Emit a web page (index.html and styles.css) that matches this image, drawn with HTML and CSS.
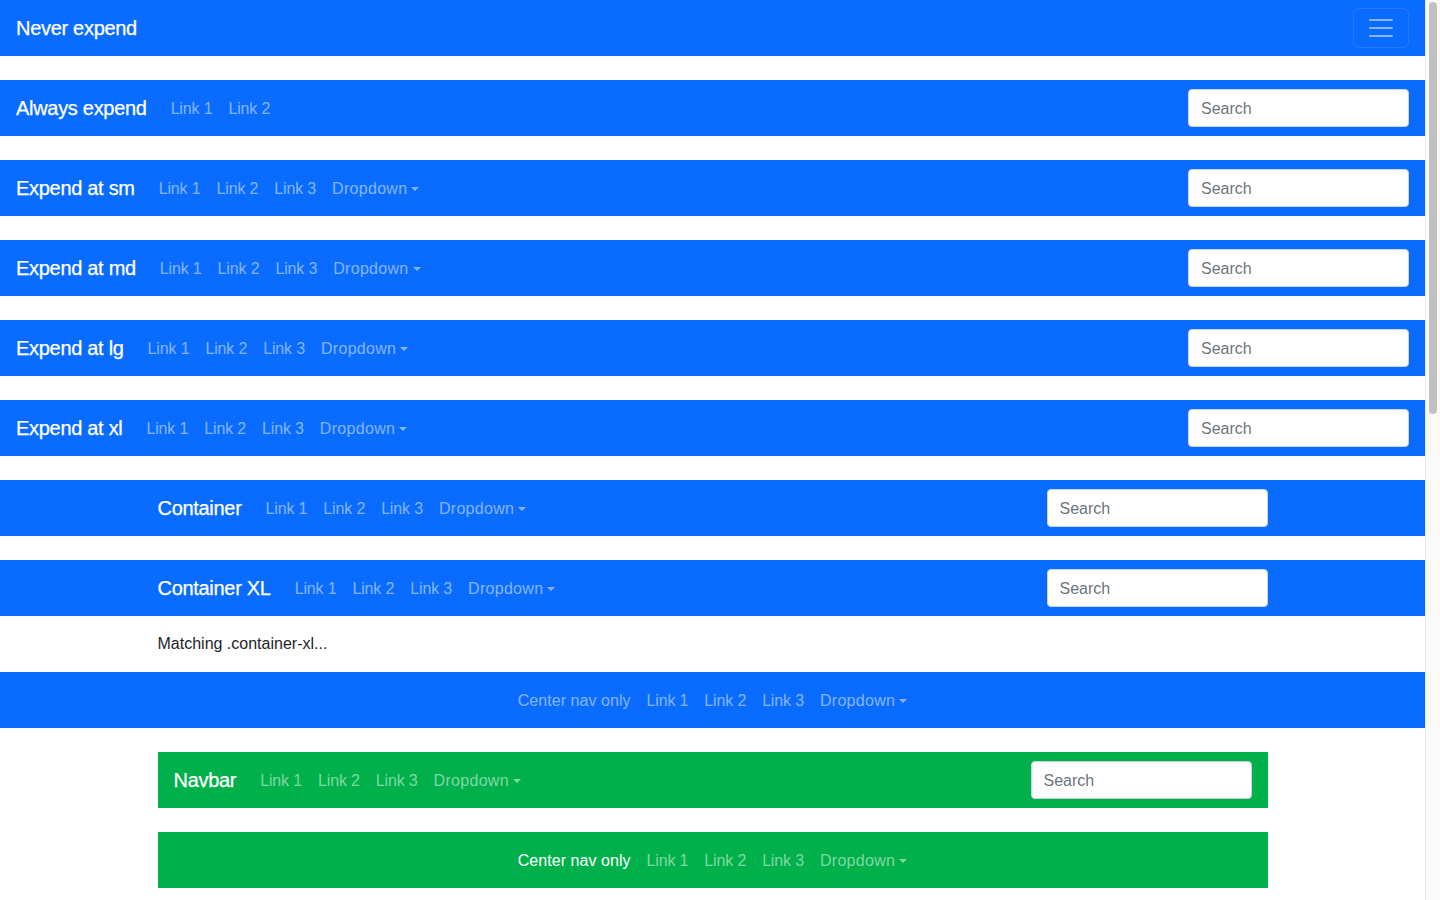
FILE: index.html
```html
<!DOCTYPE html>
<html lang="en">
<head>
<meta charset="utf-8">
<title>Navbars</title>
<link rel="stylesheet" href="styles.css">
</head>
<body>
<main class="page">
  <nav class="navbar">
    <a class="brand" href="#">Never expend</a>
    <button class="toggler" type="button" aria-label="Toggle navigation">
      <svg class="toggler-icon" viewBox="0 0 30 30" width="30" height="30"><path d="M4 7h22M4 15h22M4 23h22" stroke="rgba(255,255,255,0.5)" stroke-width="2" stroke-linecap="round" fill="none"/></svg>
    </button>
  </nav>

  <nav class="navbar">
    <a class="brand" href="#">Always expend</a>
    <ul class="nav"><li><a class="link" href="#">Link 1</a></li><li><a class="link" href="#">Link 2</a></li></ul>
    <form class="search"><input class="search-input" type="text" placeholder="Search"></form>
  </nav>

  <nav class="navbar">
    <a class="brand" href="#">Expend at sm</a>
    <ul class="nav"><li><a class="link" href="#">Link 1</a></li><li><a class="link" href="#">Link 2</a></li><li><a class="link" href="#">Link 3</a></li><li><a class="link dropdown" href="#">Dropdown</a></li></ul>
    <form class="search"><input class="search-input" type="text" placeholder="Search"></form>
  </nav>

  <nav class="navbar">
    <a class="brand" href="#">Expend at md</a>
    <ul class="nav"><li><a class="link" href="#">Link 1</a></li><li><a class="link" href="#">Link 2</a></li><li><a class="link" href="#">Link 3</a></li><li><a class="link dropdown" href="#">Dropdown</a></li></ul>
    <form class="search"><input class="search-input" type="text" placeholder="Search"></form>
  </nav>

  <nav class="navbar">
    <a class="brand" href="#">Expend at lg</a>
    <ul class="nav"><li><a class="link" href="#">Link 1</a></li><li><a class="link" href="#">Link 2</a></li><li><a class="link" href="#">Link 3</a></li><li><a class="link dropdown" href="#">Dropdown</a></li></ul>
    <form class="search"><input class="search-input" type="text" placeholder="Search"></form>
  </nav>

  <nav class="navbar">
    <a class="brand" href="#">Expend at xl</a>
    <ul class="nav"><li><a class="link" href="#">Link 1</a></li><li><a class="link" href="#">Link 2</a></li><li><a class="link" href="#">Link 3</a></li><li><a class="link dropdown" href="#">Dropdown</a></li></ul>
    <form class="search"><input class="search-input" type="text" placeholder="Search"></form>
  </nav>

  <nav class="navbar navbar-wide">
    <div class="container">
      <a class="brand" href="#">Container</a>
      <ul class="nav"><li><a class="link" href="#">Link 1</a></li><li><a class="link" href="#">Link 2</a></li><li><a class="link" href="#">Link 3</a></li><li><a class="link dropdown" href="#">Dropdown</a></li></ul>
      <form class="search"><input class="search-input" type="text" placeholder="Search"></form>
    </div>
  </nav>

  <nav class="navbar navbar-wide navbar-flush">
    <div class="container">
      <a class="brand" href="#">Container XL</a>
      <ul class="nav"><li><a class="link" href="#">Link 1</a></li><li><a class="link" href="#">Link 2</a></li><li><a class="link" href="#">Link 3</a></li><li><a class="link dropdown" href="#">Dropdown</a></li></ul>
      <form class="search"><input class="search-input" type="text" placeholder="Search"></form>
    </div>
  </nav>

  <div class="container note">
    <p>Matching .container-xl...</p>
  </div>

  <nav class="navbar navbar-center">
    <ul class="nav"><li><a class="link link-long" href="#">Center nav only</a></li><li><a class="link" href="#">Link 1</a></li><li><a class="link" href="#">Link 2</a></li><li><a class="link" href="#">Link 3</a></li><li><a class="link dropdown" href="#">Dropdown</a></li></ul>
  </nav>

  <div class="container">
    <nav class="navbar navbar-green">
      <a class="brand" href="#">Navbar</a>
      <ul class="nav"><li><a class="link" href="#">Link 1</a></li><li><a class="link" href="#">Link 2</a></li><li><a class="link" href="#">Link 3</a></li><li><a class="link dropdown" href="#">Dropdown</a></li></ul>
      <form class="search"><input class="search-input" type="text" placeholder="Search"></form>
    </nav>

    <nav class="navbar navbar-green navbar-center">
      <ul class="nav"><li><a class="link link-long active" href="#">Center nav only</a></li><li><a class="link" href="#">Link 1</a></li><li><a class="link" href="#">Link 2</a></li><li><a class="link" href="#">Link 3</a></li><li><a class="link dropdown" href="#">Dropdown</a></li></ul>
    </nav>
  </div>
</main>
<div class="scrollbar" aria-hidden="true"><div class="scrollbar-thumb"></div></div>
</body>
</html>
```

FILE: styles.css
```css
*, *::before, *::after { box-sizing: border-box; }

html, body {
  margin: 0;
  padding: 0;
}

body {
  font-family: "Liberation Sans", Arial, sans-serif;
  font-size: 16px;
  line-height: 24px;
  color: #212529;
  background: #fff;
}

.page {
  margin-right: 15px;
}

/* fake classic scrollbar on the right edge of the window */
.scrollbar {
  position: fixed;
  top: 0;
  right: 0;
  width: 15px;
  height: 100vh;
  background: #fafafa;
  border-left: 1px solid #e8e8e8;
  padding: 2px 3px 0 3px;
}

.scrollbar-thumb {
  width: 8px;
  height: 412px;
  background: #c1c1c1;
  border-radius: 4px;
}

.navbar {
  display: flex;
  align-items: center;
  height: 56px;
  padding: 8px 16px;
  margin-bottom: 24px;
  background: #0a6cff;
}

.navbar-wide {
  padding: 8px 0;
}

.navbar-flush {
  margin-bottom: 0;
}

.container {
  width: 1140px;
  margin: 0 auto;
  padding: 0 15px;
}

.navbar .container {
  display: flex;
  align-items: center;
}

.brand {
  font-size: 20px;
  line-height: 30px;
  color: #fff;
  text-decoration: none;
  margin-right: 16px;
  white-space: nowrap;
  letter-spacing: -0.3px;
  -webkit-text-stroke: 0.25px #fff;
}

.nav {
  display: flex;
  align-items: center;
  list-style: none;
  margin: 0;
  padding: 0;
}

.link {
  display: block;
  padding: 9px 8px 7px;
  color: rgba(255, 255, 255, 0.5);
  text-decoration: none;
  white-space: nowrap;
  letter-spacing: -0.15px;
}

.link-long {
  letter-spacing: 0.05px;
}

.link.active {
  color: #fff;
}

.dropdown {
  letter-spacing: 0.3px;
}

.dropdown::after {
  content: "";
  display: inline-block;
  margin-left: 4px;
  vertical-align: 3px;
  border-top: 4.5px solid;
  border-right: 4.5px solid transparent;
  border-left: 4.5px solid transparent;
  border-bottom: 0;
}

.search {
  margin: 0 0 0 auto;
}

.search-input {
  display: block;
  width: 221px;
  height: 38px;
  padding: 7px 12px 5px;
  font-family: inherit;
  font-size: 16px;
  line-height: 24px;
  color: #495057;
  background: #fff;
  border: 1px solid #ced4da;
  border-radius: 4px;
}

.search-input::placeholder {
  color: #6c757d;
  opacity: 1;
}

.toggler {
  margin-left: auto;
  width: 56px;
  height: 40px;
  padding: 4px 12px;
  background: transparent;
  border: 1px solid rgba(255, 255, 255, 0.1);
  border-radius: 6px;
  display: flex;
  align-items: center;
  justify-content: center;
}

.toggler-icon {
  display: block;
}

.note {
  height: 56px;
  display: flex;
  align-items: center;
}

.note p {
  margin: 0;
}

.navbar-center {
  justify-content: center;
}

.navbar-green {
  background: #00b04a;
}
```
